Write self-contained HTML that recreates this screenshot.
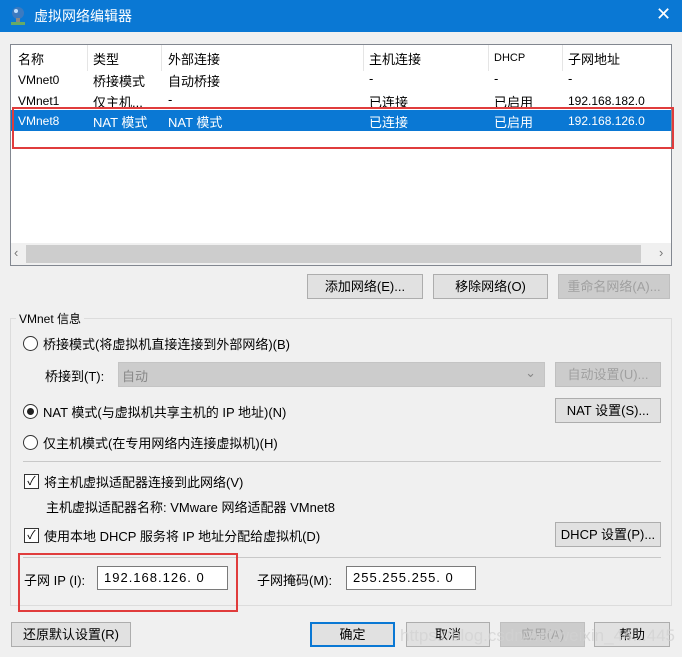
<!DOCTYPE html>
<html><head><meta charset="utf-8"><style>
*{box-sizing:border-box;margin:0;padding:0}
body{width:682px;height:657px;background:#f0f0f0;font-family:"Liberation Sans","Noto Sans CJK SC",sans-serif;font-size:13px;color:#000;position:relative;overflow:hidden}
.a{position:absolute;white-space:nowrap}
.title{left:0;top:0;width:682px;height:32px;background:#0a78d4;color:#fff;font-size:14px}
.btn{position:absolute;height:25px;background:#e1e1e1;border:1px solid #adadad;text-align:center;line-height:23px;font-size:13px}
.dis{color:#a0a0a0;background:#ccc;border-color:#bfbfbf}
.radio{position:absolute;width:15px;height:15px;border:1px solid #333;border-radius:50%;background:#fff}
.chk{position:absolute;width:15px;height:15px;border:1px solid #333;background:#fff;font-size:12px;line-height:13px;text-align:center}
.inp{position:absolute;height:24px;background:#fff;border:1px solid #7a7a7a;line-height:22px;padding-left:6px;letter-spacing:1px}
.red{position:absolute;border:2px solid #e03c3c}
</style></head><body>
<div class="a title"><svg class="a" style="left:9px;top:6px" width="18" height="20"><circle cx="9" cy="7" r="6" fill="#3b7ac0"/><circle cx="7" cy="5" r="2" fill="#bfe0ff"/><rect x="7" y="12" width="4" height="4" fill="#888"/><rect x="2" y="16" width="14" height="3" fill="#6a6"/></svg><span class="a" style="left:34px;top:6px">虚拟网络编辑器</span><span class="a" style="left:656px;top:4px;font-size:18px">✕</span></div>

<div class="a" style="left:10px;top:44px;width:662px;height:222px;background:#fff;border:1px solid #828790"></div>
<div class="a" style="left:11px;top:45px;width:660px;height:26px">
<span class="a" style="left:7px;top:4px">名称</span><span class="a" style="left:82px;top:4px">类型</span><span class="a" style="left:157px;top:4px">外部连接</span><span class="a" style="left:358px;top:4px">主机连接</span><span class="a" style="left:483px;top:7px;font-size:11px">DHCP</span><span class="a" style="left:557px;top:4px">子网地址</span>
<div class="a" style="left:76px;top:0;width:1px;height:26px;background:#e5e5e5"></div><div class="a" style="left:150px;top:0;width:1px;height:26px;background:#e5e5e5"></div><div class="a" style="left:352px;top:0;width:1px;height:26px;background:#e5e5e5"></div><div class="a" style="left:477px;top:0;width:1px;height:26px;background:#e5e5e5"></div><div class="a" style="left:551px;top:0;width:1px;height:26px;background:#e5e5e5"></div>
</div>
<div class="a" style="left:11px;top:70px;width:660px;height:20px"><span class="a" style="left:7px;top:3px;font-size:12px">VMnet0</span><span class="a" style="left:82px;top:1px">桥接模式</span><span class="a" style="left:157px;top:1px">自动桥接</span><span class="a" style="left:358px;top:1px">-</span><span class="a" style="left:483px;top:1px">-</span><span class="a" style="left:557px;top:1px">-</span></div>
<div class="a" style="left:11px;top:90px;width:660px;height:20px"><span class="a" style="left:7px;top:4px;font-size:12px">VMnet1</span><span class="a" style="left:82px;top:2px">仅主机...</span><span class="a" style="left:157px;top:2px">-</span><span class="a" style="left:358px;top:2px">已连接</span><span class="a" style="left:483px;top:2px">已启用</span><span class="a" style="left:557px;top:4px;font-size:12px">192.168.182.0</span></div>
<div class="a" style="left:11px;top:110px;width:660px;height:21px;background:#0a78d4;color:#fff"><span class="a" style="left:7px;top:4px;font-size:12px">VMnet8</span><span class="a" style="left:82px;top:2px">NAT 模式</span><span class="a" style="left:157px;top:2px">NAT 模式</span><span class="a" style="left:358px;top:2px">已连接</span><span class="a" style="left:483px;top:2px">已启用</span><span class="a" style="left:557px;top:4px;font-size:12px">192.168.126.0</span></div>
<div class="red" style="left:12px;top:107px;width:662px;height:42px"></div>
<div class="a" style="left:11px;top:243px;width:660px;height:22px;background:#f0f0f0"><div class="a" style="left:15px;top:2px;width:615px;height:18px;background:#cdcdcd"></div><span class="a" style="left:3px;top:2px;color:#777">‹</span><span class="a" style="left:648px;top:2px;color:#777">›</span></div>

<div class="btn" style="left:307px;top:274px;width:116px">添加网络(E)...</div>
<div class="btn" style="left:433px;top:274px;width:115px">移除网络(O)</div>
<div class="btn dis" style="left:558px;top:274px;width:112px">重命名网络(A)...</div>

<div class="a" style="left:10px;top:318px;width:662px;height:288px;border:1px solid #dcdcdc"></div>
<span class="a" style="left:16px;top:310px;background:#f0f0f0;padding:0 3px;font-size:12px">VMnet 信息</span>

<div class="radio" style="left:23px;top:336px"></div><span class="a" style="left:43px;top:334px">桥接模式(将虚拟机直接连接到外部网络)(B)</span>
<span class="a" style="left:45px;top:366px">桥接到(T):</span>
<div class="a" style="left:118px;top:362px;width:427px;height:25px;background:#ccc;border:1px solid #c4c4c4;color:#888;padding:3px 3px">自动<span class="a" style="right:8px;top:2px">⌄</span></div>
<div class="btn dis" style="left:555px;top:362px;width:106px">自动设置(U)...</div>
<div class="radio" style="left:23px;top:404px"><div class="a" style="left:3px;top:3px;width:7px;height:7px;border-radius:50%;background:#222"></div></div><span class="a" style="left:43px;top:402px">NAT 模式(与虚拟机共享主机的 IP 地址)(N)</span>
<div class="btn" style="left:555px;top:398px;width:106px">NAT 设置(S)...</div>
<div class="radio" style="left:23px;top:435px"></div><span class="a" style="left:43px;top:433px">仅主机模式(在专用网络内连接虚拟机)(H)</span>
<div class="a" style="left:23px;top:461px;width:638px;height:1px;background:#c8c8c8"></div>
<div class="chk" style="left:24px;top:474px">✓</div><span class="a" style="left:44px;top:472px">将主机虚拟适配器连接到此网络(V)</span>
<span class="a" style="left:46px;top:497px">主机虚拟适配器名称: VMware 网络适配器 VMnet8</span>
<div class="chk" style="left:24px;top:528px">✓</div><span class="a" style="left:44px;top:526px">使用本地 DHCP 服务将 IP 地址分配给虚拟机(D)</span>
<div class="btn" style="left:555px;top:522px;width:106px">DHCP 设置(P)...</div>
<div class="a" style="left:23px;top:557px;width:638px;height:1px;background:#c8c8c8"></div>
<span class="a" style="left:24px;top:570px">子网 IP (I):</span>
<div class="inp" style="left:97px;top:566px;width:131px">192.168.126. 0</div>
<span class="a" style="left:257px;top:570px">子网掩码(M):</span>
<div class="inp" style="left:346px;top:566px;width:130px">255.255.255. 0</div>
<div class="red" style="left:18px;top:553px;width:220px;height:59px"></div>

<div class="btn" style="left:11px;top:622px;width:120px">还原默认设置(R)</div>
<div class="btn" style="left:310px;top:622px;width:85px;border:2px solid #0a78d4;line-height:21px">确定</div>
<div class="btn" style="left:406px;top:622px;width:84px">取消</div>
<div class="btn dis" style="left:500px;top:622px;width:85px">应用(A)</div>
<div class="btn" style="left:594px;top:622px;width:76px">帮助</div>
<span class="a" style="left:400px;top:626px;color:rgba(210,210,210,.75);font-size:17px">https://blog.csdn.net/weixin_44...445</span>
</body></html>
